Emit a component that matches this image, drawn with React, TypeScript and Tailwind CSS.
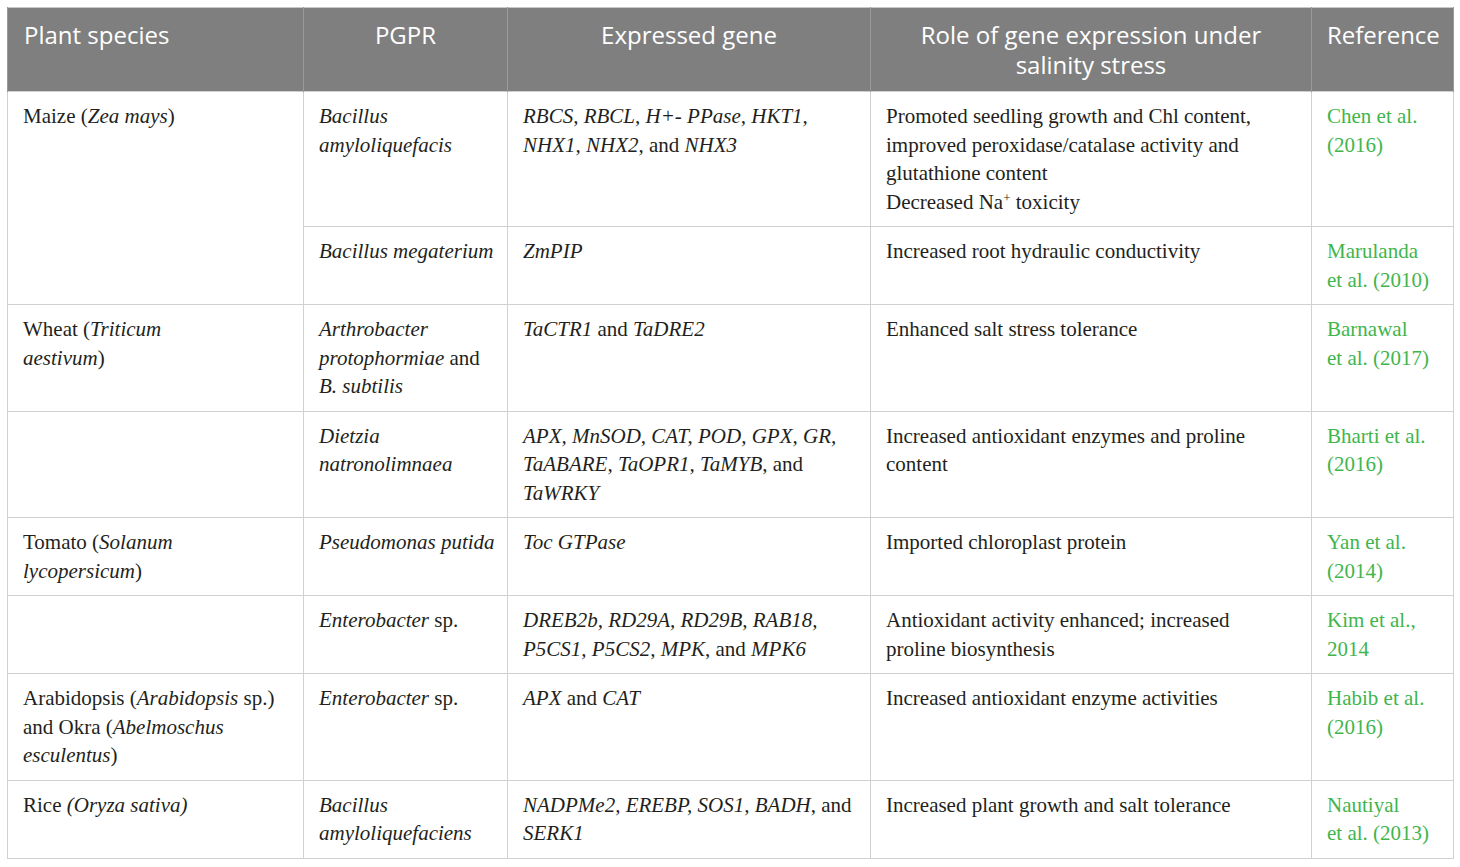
import React from "react";

type Cell = React.ReactNode;

const I = ({ children }: { children: React.ReactNode }) => <i className="italic">{children}</i>;

const rows: { plant?: Cell; span?: number; skipPlant?: boolean; pgpr: Cell; gene: Cell; role: Cell; refs: Cell }[] = [
  {
    plant: (
      <>
        Maize (<I>Zea mays</I>)
      </>
    ),
    span: 2,
    pgpr: <I>Bacillus amyloliquefacis</I>,
    gene: (
      <>
        <I>RBCS, RBCL, H+- PPase, HKT1, NHX1, NHX2</I>, and <I>NHX3</I>
      </>
    ),
    role: (
      <>
        Promoted seedling growth and Chl content, improved peroxidase/catalase activity and glutathione content
        <br />
        Decreased Na<sup className="text-[13px]">+</sup> toxicity
      </>
    ),
    refs: "Chen et al. (2016)",
  },
  {
    skipPlant: true,
    pgpr: <I>Bacillus megaterium</I>,
    gene: <I>ZmPIP</I>,
    role: "Increased root hydraulic conductivity",
    refs: (
      <>
        Marulanda
        <br />
        et al. (2010)
      </>
    ),
  },
  {
    plant: (
      <>
        Wheat (<I>Triticum</I>
        <br />
        <I>aestivum</I>)
      </>
    ),
    pgpr: (
      <>
        <I>Arthrobacter protophormiae</I> and <I>B. subtilis</I>
      </>
    ),
    gene: (
      <>
        <I>TaCTR1</I> and <I>TaDRE2</I>
      </>
    ),
    role: "Enhanced salt stress tolerance",
    refs: (
      <>
        Barnawal
        <br />
        et al. (2017)
      </>
    ),
  },
  {
    plant: "",
    pgpr: <I>Dietzia natronolimnaea</I>,
    gene: (
      <>
        <I>APX, MnSOD, CAT, POD, GPX, GR, TaABARE, TaOPR1, TaMYB</I>, and <I>TaWRKY</I>
      </>
    ),
    role: "Increased antioxidant enzymes and proline content",
    refs: "Bharti et al. (2016)",
  },
  {
    plant: (
      <>
        Tomato (<I>Solanum lycopersicum</I>)
      </>
    ),
    pgpr: <I>Pseudomonas putida</I>,
    gene: <I>Toc GTPase</I>,
    role: "Imported chloroplast protein",
    refs: "Yan et al. (2014)",
  },
  {
    plant: "",
    pgpr: (
      <>
        <I>Enterobacter</I> sp.
      </>
    ),
    gene: (
      <>
        <I>DREB2b, RD29A, RD29B, RAB18, P5CS1, P5CS2, MPK</I>, and <I>MPK6</I>
      </>
    ),
    role: (
      <>
        Antioxidant activity enhanced; increased
        <br />
        proline biosynthesis
      </>
    ),
    refs: "Kim et al., 2014",
  },
  {
    plant: (
      <>
        Arabidopsis (<I>Arabidopsis</I> sp.) and Okra (<I>Abelmoschus esculentus</I>)
      </>
    ),
    pgpr: (
      <>
        <I>Enterobacter</I> sp.
      </>
    ),
    gene: (
      <>
        <I>APX</I> and <I>CAT</I>
      </>
    ),
    role: "Increased antioxidant enzyme activities",
    refs: "Habib et al. (2016)",
  },
  {
    plant: (
      <>
        Rice <I>(Oryza sativa)</I>
      </>
    ),
    pgpr: <I>Bacillus amyloliquefaciens</I>,
    gene: (
      <>
        <I>NADPMe2, EREBP, SOS1, BADH</I>, and <I>SERK1</I>
      </>
    ),
    role: "Increased plant growth and salt tolerance",
    refs: (
      <>
        Nautiyal
        <br />
        et al. (2013)
      </>
    ),
  },
];

const td = "border border-[#d0d0d0] align-top pl-[15px] pr-[12px] pt-[10px] pb-[10px]";
const th = "border-x border-[#9a9a9a] align-top px-[15px] pt-[12px] pb-[11px] font-normal";

export default function App() {
  return (
    <div className="w-[1460px] h-[867px] bg-white pl-[7px] pt-[7px]">
      <table className="table-fixed border-collapse w-[1446px] border border-[#d0d0d0]">
        <colgroup>
          <col className="w-[296px]" />
          <col className="w-[204px]" />
          <col className="w-[363px]" />
          <col className="w-[441px]" />
          <col className="w-[142px]" />
        </colgroup>
        <thead>
          <tr className="bg-[#7f7f7f] text-white text-[24px] leading-[30px] font-['Open_Sans',sans-serif] border-t border-[#c8c8c8]">
            <th className={`${th} text-left pl-[16px]`}>Plant species</th>
            <th className={`${th} text-center`}>PGPR</th>
            <th className={`${th} text-center`}>Expressed gene</th>
            <th className={`${th} text-center`}>Role of gene expression under salinity stress</th>
            <th className={`${th} text-center px-[8px]`}>Reference</th>
          </tr>
        </thead>
        <tbody className="font-['Liberation_Serif',serif] text-[21px] leading-[28.5px] text-[#231f20]">
          {rows.map((r, i) => (
            <tr key={i}>
              {!r.skipPlant && (
                <td className={td} rowSpan={r.span}>
                  {r.plant}
                </td>
              )}
              <td className={td}>{r.pgpr}</td>
              <td className={td}>{r.gene}</td>
              <td className={td}>{r.role}</td>
              <td className={`${td} text-[#3fb54c]`}>{r.refs}</td>
            </tr>
          ))}
        </tbody>
      </table>
    </div>
  );
}
